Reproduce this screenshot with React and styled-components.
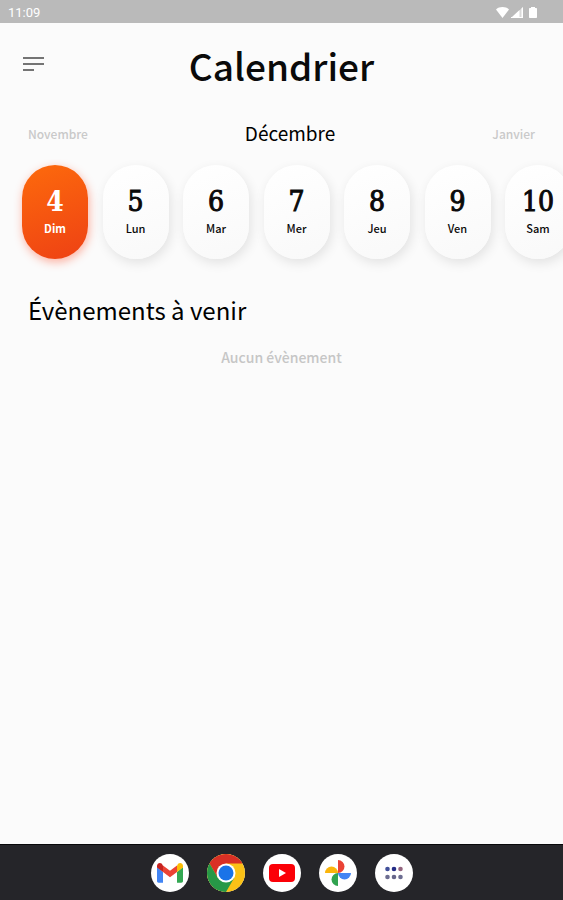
import React, { useState } from 'react';
import styled, { createGlobalStyle, css } from 'styled-components';

const GlobalStyle = createGlobalStyle`
  * {
    box-sizing: border-box;
  }

  body {
    margin: 0;
    background-color: #fbfbfb;
    color: #0a0a0a;
    font-family: 'Noto Sans CJK JP', 'Noto Sans', sans-serif;
  }

  button {
    padding: 0;
    border: none;
    background: none;
    color: inherit;
    font: inherit;
    cursor: pointer;
  }
`;

const Screen = styled.div`
  display: flex;
  flex-direction: column;
  min-height: 100vh;
`;

const StatusBar = styled.div`
  display: flex;
  align-items: center;
  justify-content: space-between;
  height: 23px;
  padding: 2px 25px 0 8px;
  background-color: #bababa;
  color: #ffffff;
  font-family: Roboto, sans-serif;
  font-size: 13px;
`;

const StatusIcons = styled.svg`
  display: block;
  width: 42px;
  height: 14px;
`;

const Header = styled.header`
  display: grid;
  grid-template-columns: 22px 1fr 22px;
  align-items: center;
  height: 84px;
  padding: 0 22px;
`;

const MenuButton = styled.button`
  display: flex;
  height: 22px;
  margin-top: -2px;
`;

const Title = styled.h1`
  margin: 0;
  font-size: 37px;
  font-weight: 500;
  line-height: 60px;
  text-align: center;
`;

const MonthNav = styled.nav`
  display: flex;
  justify-content: space-between;
  align-items: center;
  height: 52px;
  padding: 0 28px;
`;

const MonthButton = styled.button`
  color: #c9c9c9;
  font-size: 12px;
  font-weight: 500;
`;

const CurrentMonth = styled.h2`
  margin: 0;
  color: #000000;
  font-size: 19px;
  font-weight: 400;
  line-height: 30px;
`;

const DayStrip = styled.div`
  padding: 6px 0 28px 22px;
  overflow: hidden;
`;

const DayList = styled.div`
  display: flex;
  justify-content: space-between;
  margin-right: -8px;
`;

const Day = styled.button`
  display: flex;
  flex: none;
  flex-direction: column;
  align-items: center;
  width: 66px;
  height: 94px;
  padding-top: 19px;
  border-radius: 33px;
  background: linear-gradient(160deg, #ffffff, #f9f9f9);
  box-shadow: 2px 4px 12px rgb(0 0 0 / 0.1);

  ${({ $active }) => $active && css`
    background: linear-gradient(160deg, #fd6a0c, #ee4114);
    box-shadow: 1px 3px 10px rgb(255 60 20 / 0.4);
    color: #ffffff;
  `}
`;

const DayNumber = styled.span`
  font-family: 'DejaVu Serif Condensed', 'DejaVu Serif', serif;
  font-size: 28px;
  font-weight: ${({ $active }) => ($active ? 700 : 400)};
  line-height: 36px;
  -webkit-text-stroke: ${({ $active }) => ($active ? 0 : '1px currentColor')};
`;

const DayName = styled.span`
  font-size: 11px;
  font-weight: ${({ $active }) => ($active ? 700 : 500)};
  line-height: 16px;
`;

const Events = styled.section`
  flex: 1;
  padding: 0 28px;
`;

const EventsTitle = styled.h2`
  margin: 0;
  color: #000000;
  font-size: 24px;
  font-weight: 400;
  line-height: 46px;
`;

const EmptyMessage = styled.p`
  margin: 14px 0 0;
  color: #c6c6c6;
  font-size: 14px;
  font-weight: 500;
  line-height: 20px;
  text-align: center;
`;

const Dock = styled.footer`
  display: flex;
  align-items: center;
  justify-content: center;
  gap: 18px;
  height: 56px;
  border-top: 1px solid #08080a;
  background-color: #252529;
`;

const DockButton = styled.button`
  display: flex;
  align-items: center;
  justify-content: center;
  width: 38px;
  height: 38px;
  border-radius: 50%;
  background-color: #ffffff;
`;

const DAYS = [
  { number: 4, name: 'Dim' },
  { number: 5, name: 'Lun' },
  { number: 6, name: 'Mar' },
  { number: 7, name: 'Mer' },
  { number: 8, name: 'Jeu' },
  { number: 9, name: 'Ven' },
  { number: 10, name: 'Sam' },
];

const MenuIcon = () => (
  <svg width="22" height="22" viewBox="0 0 22 22" fill="#747474">
    <rect x="1" y="4" width="21" height="2" />
    <rect x="1" y="10" width="21" height="2" />
    <rect x="1" y="16" width="11" height="2" />
  </svg>
);

const GmailIcon = () => (
  <svg width="26" height="20" viewBox="0 0 26 20">
    <path d="M0 3v15c0 1 .7 1.700 1.700 1.700H6V9L0 4z" fill="#4285f4" />
    <path d="M26 3v15c0 1-.7 1.700-1.700 1.700H20V9l6-5z" fill="#34a853" />
    <path d="M20 2.500V9l6-4.500V2.800C26 .4 23.200-.8 21.400.6z" fill="#fbbc04" />
    <path d="M6 9V2.500l7 5.200 7-5.200V9l-7 5.300z" fill="#ea4335" />
    <path d="M0 2.800v1.700L6 9V2.500L4.600.6C2.800-.8 0 .4 0 2.800z" fill="#c5221f" />
  </svg>
);

const ChromeIcon = () => (
  <svg width="38" height="38" viewBox="0 0 38 38">
    <circle cx="19" cy="19" r="19" fill="#fbc116" />
    <path d="M2.550 9.500A19 19 0 0 1 35.450 9.500H19L10.770 23.750z" fill="#d93025" />
    <path d="M2.550 9.500A19 19 0 0 0 19 38L27.230 23.750H10.770z" fill="#279847" />
    <circle cx="19" cy="19" r="9.500" fill="#ffffff" />
    <circle cx="19" cy="19" r="7.500" fill="#1a73e8" />
  </svg>
);

const YoutubeIcon = () => (
  <svg width="26" height="18" viewBox="0 0 26 18">
    <rect width="26" height="18" rx="4" fill="#fb0007" />
    <path d="M10 5l7 4-7 4z" fill="#ffffff" />
  </svg>
);

const PhotosIcon = () => (
  <svg width="28" height="28" viewBox="0 0 28 28">
    <path d="M14 1a6.500 6.500 0 0 1 0 13z" fill="#ea4335" />
    <path d="M27 14a6.500 6.500 0 0 1-13 0z" fill="#4285f4" />
    <path d="M14 27a6.500 6.500 0 0 1 0-13z" fill="#31a350" />
    <path d="M1 14a6.500 6.500 0 0 1 13 0z" fill="#fbb50b" />
  </svg>
);

const AppsIcon = () => (
  <svg width="20" height="14" viewBox="0 0 20 14">
    <circle cx="3.500" cy="3" r="2.300" fill="#41509a" />
    <circle cx="10" cy="3" r="2.300" fill="#252d86" />
    <circle cx="16.500" cy="3" r="2.300" fill="#94657f" />
    <circle cx="3.500" cy="11" r="2.300" fill="#6c6d91" />
    <circle cx="10" cy="11" r="2.300" fill="#66668a" />
    <circle cx="16.500" cy="11" r="2.300" fill="#6c6d91" />
  </svg>
);

const APPS = [
  { name: 'Gmail', Icon: GmailIcon },
  { name: 'Chrome', Icon: ChromeIcon },
  { name: 'YouTube', Icon: YoutubeIcon },
  { name: 'Photos', Icon: PhotosIcon },
  { name: 'Applications', Icon: AppsIcon },
];

const App = () => {
  const [selected, setSelected] = useState(4);

  return (
    <>
      <GlobalStyle />
      <Screen>
        <StatusBar>
          <span>11:09</span>
          <StatusIcons viewBox="0 0 42 14" fill="#ffffff">
            <path d="M0 3.500C3.500.3 9.500.3 13 3.500L6.500 12z" />
            <path d="M15 12L27 1v11z" fillOpacity="0.45" />
            <path d="M15 12L23.500 4v8zM25.500 2.500L27 1v11h-1.500zM15 12v-1h12v1z" />
            <path d="M33 3c0-.6.4-1 1-1h1V1h4v1h1c.6 0 1 .4 1 1v8c0 .6-.4 1-1 1h-6c-.6 0-1-.4-1-1z" />
          </StatusIcons>
        </StatusBar>
        <Header>
          <MenuButton aria-label="Menu">
            <MenuIcon />
          </MenuButton>
          <Title>Calendrier</Title>
        </Header>
        <MonthNav>
          <MonthButton>Novembre</MonthButton>
          <CurrentMonth>Décembre</CurrentMonth>
          <MonthButton>Janvier</MonthButton>
        </MonthNav>
        <DayStrip>
          <DayList>
            {DAYS.map(({ number, name }) => (
              <Day key={number} $active={number === selected} onClick={() => setSelected(number)}>
                <DayNumber $active={number === selected}>{number}</DayNumber>
                <DayName $active={number === selected}>{name}</DayName>
              </Day>
            ))}
          </DayList>
        </DayStrip>
        <Events>
          <EventsTitle>Évènements à venir</EventsTitle>
          <EmptyMessage>Aucun évènement</EmptyMessage>
        </Events>
        <Dock>
          {APPS.map(({ name, Icon }) => (
            <DockButton key={name} aria-label={name}>
              <Icon />
            </DockButton>
          ))}
        </Dock>
      </Screen>
    </>
  );
};

export default App;
